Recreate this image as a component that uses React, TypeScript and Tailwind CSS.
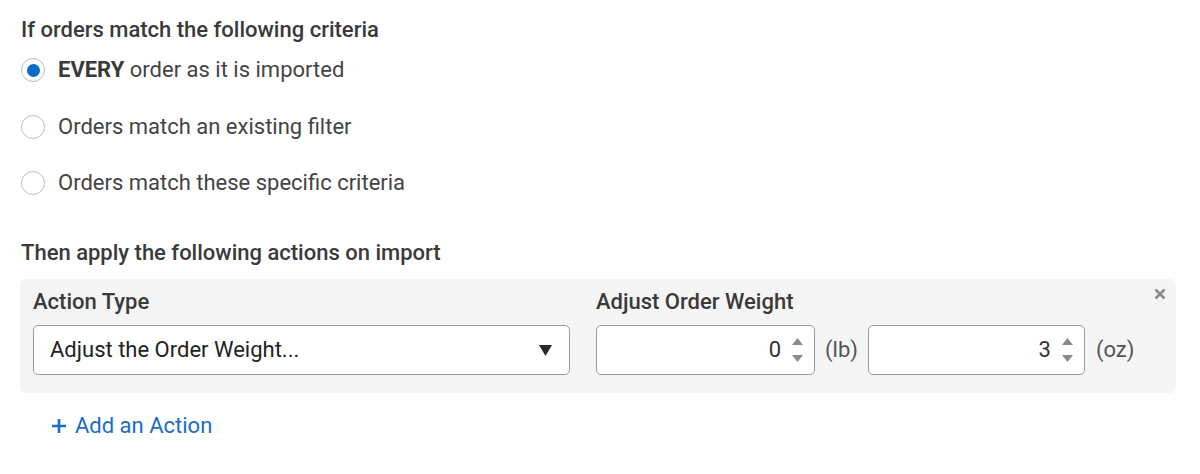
import React from "react";

function Radio({ checked }: { checked?: boolean }) {
  return (
    <span className="flex h-[24px] w-[24px] shrink-0 items-center justify-center rounded-full border border-[#b9bfc4] bg-white">
      {checked && <span className="h-[13px] w-[13px] rounded-full bg-[#0b6bcb]" />}
    </span>
  );
}

function Spinner() {
  return (
    <span className="flex flex-col items-center gap-[10px]">
      <svg width="11" height="7" viewBox="0 0 11 7"><path d="M5.5 0 L11 7 L0 7 Z" fill="#8a8a8a" /></svg>
      <svg width="11" height="7" viewBox="0 0 11 7"><path d="M0 0 L11 0 L5.5 7 Z" fill="#8a8a8a" /></svg>
    </span>
  );
}

export default function App() {
  return (
    <div className="min-h-[474px] bg-white pl-[20px] pr-[24px] pt-[18px] font-['Roboto',sans-serif] text-[22px] text-[#333]">
      <div className="pl-[1px] font-medium leading-[24px] text-[#3a3a3a]">If orders match the following criteria</div>
      <div className="flex h-[56px] items-center gap-[13px] pl-[1px]">
        <Radio checked />
        <span className="leading-[24px] text-[#444]"><span className="font-bold text-[#3a3a3a]">EVERY</span> order as it is imported</span>
      </div>
      <div className="flex h-[57px] items-center gap-[13px] pl-[1px]">
        <Radio />
        <span className="leading-[24px] text-[#444]">Orders match an existing filter</span>
      </div>
      <div className="flex h-[56px] items-center gap-[13px] pl-[1px]">
        <Radio />
        <span className="leading-[24px] text-[#444]">Orders match these specific criteria</span>
      </div>
      <div className="mt-[30px] pl-[1px] font-medium leading-[24px] text-[#3a3a3a]">Then apply the following actions on import</div>
      <div className="relative mt-[14px] flex gap-[26px] rounded-[6px] bg-[#f5f5f5] pb-[18px] pl-[13px] pr-[13px] pt-[12px]">
        <div className="flex w-[537px] flex-col">
          <div className="mb-[12px] font-medium leading-[22px] text-[#3a3a3a]">Action Type</div>
          <div className="flex h-[50px] items-center justify-between rounded-[5px] border border-[#9a9a9a] bg-white pl-[16px] pr-[17px]">
            <span className="leading-[24px] text-[#222]">Adjust the Order Weight...</span>
            <svg width="13" height="11" viewBox="0 0 13 11"><path d="M0 0 L13 0 L6.5 11 Z" fill="#2a2a2a" /></svg>
          </div>
        </div>
        <div className="flex flex-col">
          <div className="mb-[12px] font-medium leading-[22px] text-[#3a3a3a]">Adjust Order Weight</div>
          <div className="flex items-center">
            <div className="flex h-[50px] w-[219px] items-center justify-end gap-[11px] rounded-[5px] border border-[#9a9a9a] bg-white pr-[11px]">
              <span className="leading-[24px] text-[#333]">0</span>
              <Spinner />
            </div>
            <span className="ml-[10px] mr-[10px] leading-[24px] text-[#555]">(lb)</span>
            <div className="flex h-[50px] w-[217px] items-center justify-end gap-[11px] rounded-[5px] border border-[#9a9a9a] bg-white pr-[11px]">
              <span className="leading-[24px] text-[#333]">3</span>
              <Spinner />
            </div>
            <span className="ml-[11px] leading-[24px] text-[#555]">(oz)</span>
          </div>
        </div>
        <svg className="absolute right-[10px] top-[9px]" width="12" height="12" viewBox="0 0 12 12">
          <path d="M1.5 1.5 L10.5 10.5 M10.5 1.5 L1.5 10.5" stroke="#8c8c8c" strokeWidth="2.6" strokeLinecap="butt" />
        </svg>
      </div>
      <div className="mt-[21px] flex items-center gap-[9px] pl-[32px] leading-[24px] text-[#1a6dc7]">
        <svg width="14" height="14" viewBox="0 0 14 14"><path d="M7 0 V14 M0 7 H14" stroke="#1a6dc7" strokeWidth="2.6" /></svg>
        <span>Add an Action</span>
      </div>
    </div>
  );
}
